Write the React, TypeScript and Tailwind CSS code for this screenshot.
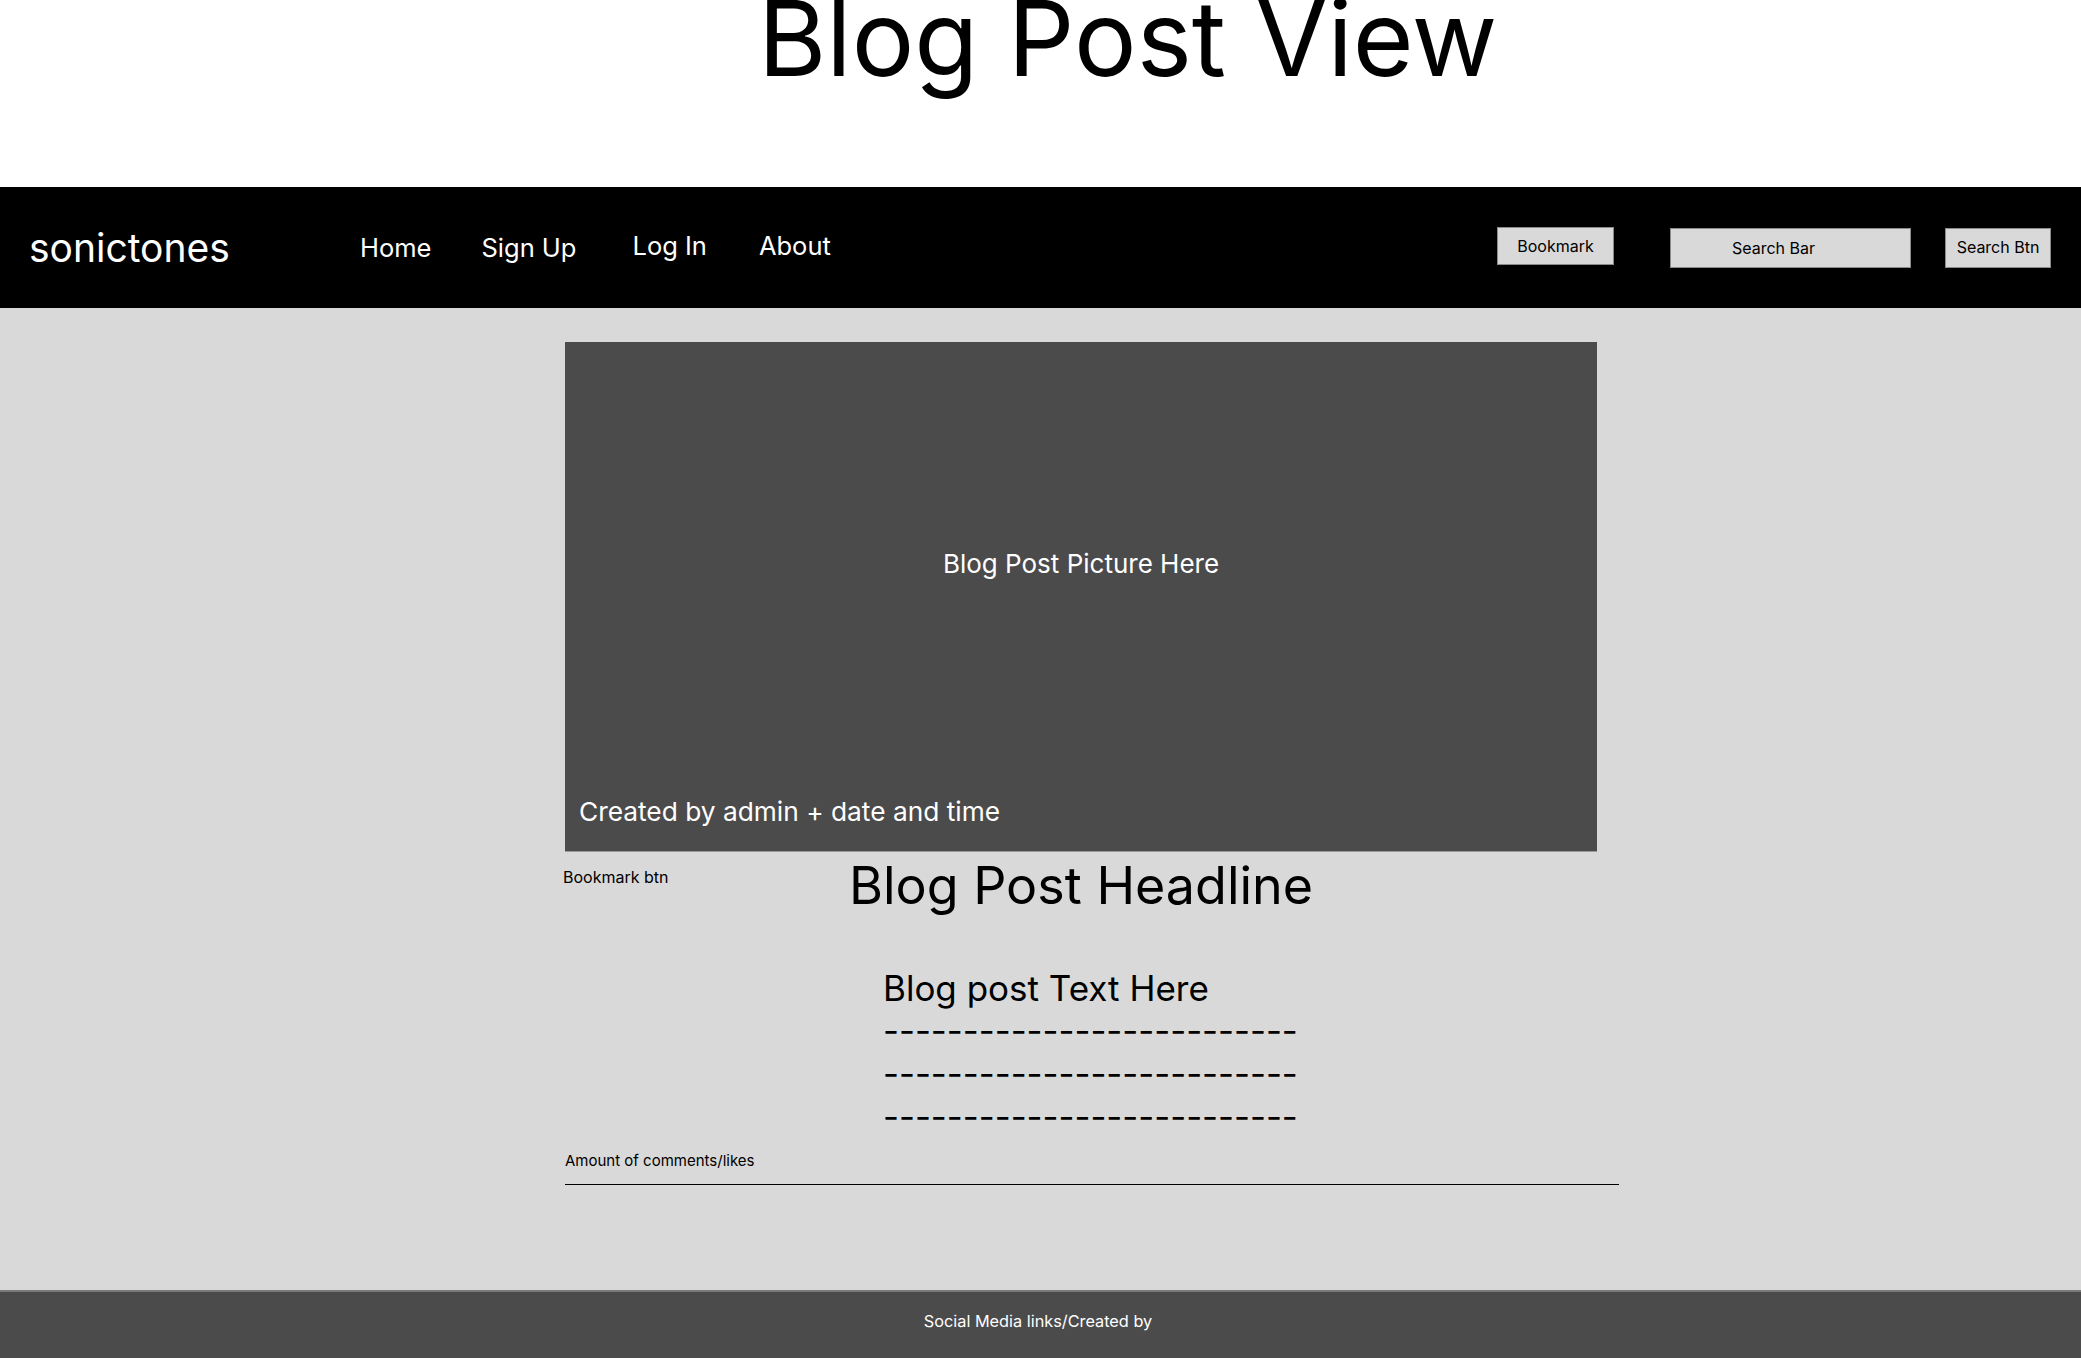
export default function App() {
  const font = { fontFamily: "Inter, 'Noto Sans', sans-serif" };
  const dashes = "--------------------------";

  return (
    <div className="flex h-[1358px] w-[2081px] flex-col overflow-hidden bg-white text-black" style={font}>
      {/* Page title */}
      <header className="h-[187px] shrink-0 overflow-hidden bg-white">
        <h1 className="ml-[758px] mt-[-24px] text-[104.5px] leading-[1.2] font-normal tracking-normal">
          Blog Post View
        </h1>
      </header>

      {/* Navbar */}
      <nav className="flex h-[121px] shrink-0 items-center bg-black text-white">
        <div className="ml-[29px] w-[331px] text-[39px] leading-none">sonictones</div>
        <ul className="flex items-center text-[25.5px] leading-none">
          <li>Home</li>
          <li className="ml-[50px]">Sign Up</li>
          <li className="-mt-[3px] ml-[56px]">Log In</li>
          <li className="-mt-[3px] ml-[52px]">About</li>
        </ul>
        <div className="ml-auto mr-[30px] flex items-center text-[16px] leading-none text-black">
          <button className="mb-[3px] h-[38px] w-[117px] border border-[#8a8a8a] bg-[#d9d9d9]">Bookmark</button>
          <div className="ml-[56px] flex h-[40px] w-[241px] items-center justify-center border border-[#8a8a8a] bg-[#d9d9d9] pr-[34px]">
            Search Bar
          </div>
          <button className="ml-[34px] flex h-[40px] w-[106px] items-start justify-center border border-[#8a8a8a] bg-[#d9d9d9] pt-[10px]">
            Search Btn
          </button>
        </div>
      </nav>

      {/* Main */}
      <main className="flex-1 bg-[#d9d9d9] pt-[34px]">
        <div className="ml-[565px] w-[1054px]">
          <div className="relative flex h-[510px] w-[1032px] items-center justify-center border-b border-[#9a9a9a] bg-[#4b4b4b] text-white">
            <span className="mb-[67px] text-[26px]">Blog Post Picture Here</span>
            <span className="absolute bottom-[20px] left-[14px] text-[26.3px]">Created by admin + date and time</span>
          </div>

          <div className="relative w-[1032px]">
            <span className="absolute left-[-2px] top-[13px] text-[16px]">Bookmark btn</span>
            <h2 className="pt-[1px] text-center text-[52px] leading-[1.25] font-normal">Blog Post Headline</h2>
          </div>

          <div className="ml-[318px] mt-[49px] flex flex-col">
            <p className="text-[35px] leading-[1.2]">Blog post Text Here</p>
            <p className="text-[34.7px] leading-[43px]">{dashes}</p>
            <p className="text-[34.7px] leading-[43px]">{dashes}</p>
            <p className="text-[34.7px] leading-[43px]">{dashes}</p>
          </div>

          <p className="mt-[12px] text-[15px]">Amount of comments/likes</p>
          <div className="mt-[11px] h-[1.5px] w-[1054px] bg-black" />
        </div>
      </main>

      {/* Footer */}
      <footer className="flex h-[68px] shrink-0 items-center justify-center border-t-2 border-[#7a7a7a] bg-[#4b4b4b] text-[16.3px] text-white">
        <span className="ml-[-5px] -mt-[8px]">Social Media links/Created by</span>
      </footer>
    </div>
  );
}
